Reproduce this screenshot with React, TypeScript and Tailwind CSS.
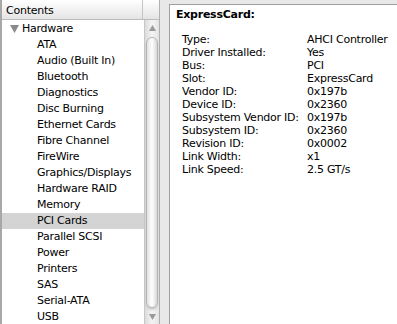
const items = [
  "ATA",
  "Audio (Built In)",
  "Bluetooth",
  "Diagnostics",
  "Disc Burning",
  "Ethernet Cards",
  "Fibre Channel",
  "FireWire",
  "Graphics/Displays",
  "Hardware RAID",
  "Memory",
  "PCI Cards",
  "Parallel SCSI",
  "Power",
  "Printers",
  "SAS",
  "Serial-ATA",
  "USB",
];

const details: [string, string][] = [
  ["Type:", "AHCI Controller"],
  ["Driver Installed:", "Yes"],
  ["Bus:", "PCI"],
  ["Slot:", "ExpressCard"],
  ["Vendor ID:", "0x197b"],
  ["Device ID:", "0x2360"],
  ["Subsystem Vendor ID:", "0x197b"],
  ["Subsystem ID:", "0x2360"],
  ["Revision ID:", "0x0002"],
  ["Link Width:", "x1"],
  ["Link Speed:", "2.5 GT/s"],
];

function Scrollbar() {
  return (
    <div className="w-[15px] flex flex-col bg-gradient-to-r from-[#dcdcdc] via-[#f4f4f4] to-[#e4e4e4] border-l border-[#c8c8c8]">
      <div className="h-[16px] flex items-center justify-center">
        <svg width="7" height="6" viewBox="0 0 7 6">
          <path d="M3.5 0 L7 6 L0 6 Z" fill="#9a9a9a" />
        </svg>
      </div>
      <div className="flex-1 mx-[1px] my-[1px] rounded-full border border-[#b4b4b4] bg-gradient-to-r from-[#e2e2e2] via-white to-[#d8d8d8] shadow-[0_2px_2px_rgba(0,0,0,0.15)]" />
      <div className="h-[15px] flex items-center justify-center">
        <svg width="7" height="6" viewBox="0 0 7 6">
          <path d="M0 0 L7 0 L3.5 6 Z" fill="#9a9a9a" />
        </svg>
      </div>
    </div>
  );
}

export default function App() {
  return (
    <div
      className="w-[397px] h-[324px] flex overflow-hidden bg-[#e8e8e8] text-[11px] tracking-[-0.25px] text-black"
      style={{ fontFamily: '"DejaVu Sans", "Liberation Sans", sans-serif' }}
    >
      <div className="w-[160px] flex flex-col bg-white border-l-2 border-r border-l-[#a8a8a8] border-r-[#b0b0b0]">
        <div className="h-[20px] flex border-b border-[#bcbcbc] bg-gradient-to-b from-white to-[#e4e4e4]">
          <div className="w-[141px] pl-[4px] pt-[3px] flex items-center border-r border-[#c4c4c4]">
            Contents
          </div>
          <div className="flex-1" />
        </div>
        <div className="flex-1 flex min-h-0">
          <div className="flex-1 pt-[1px]">
            <div className="h-[16px] flex items-center pl-[8px] gap-[3px]">
              <svg width="9" height="8" viewBox="0 0 9 8">
                <path d="M0 0 L9 0 L4.5 8 Z" fill="#8a8a8a" />
              </svg>
              <span>Hardware</span>
            </div>
            {items.map((it) => (
              <div
                key={it}
                className={
                  "h-[16px] flex items-center pl-[35px] " +
                  (it === "PCI Cards" ? "bg-[#d4d4d4]" : "")
                }
              >
                {it}
              </div>
            ))}
          </div>
          <Scrollbar />
        </div>
      </div>
      <div className="flex-1 pl-[9px] pt-[4px]">
        <div className="h-full bg-white border-t border-l border-[#a0a0a0] pl-[6px] pt-[3px]">
          <div className="font-bold h-[13px] leading-[13px]">ExpressCard:</div>
          <div className="mt-[12px]">
            {details.map(([k, v]) => (
              <div key={k} className="flex h-[13px] leading-[13px] pl-[6px]">
                <span className="w-[125px] whitespace-nowrap">{k}</span>
                <span className="whitespace-nowrap">{v}</span>
              </div>
            ))}
          </div>
        </div>
      </div>
    </div>
  );
}
